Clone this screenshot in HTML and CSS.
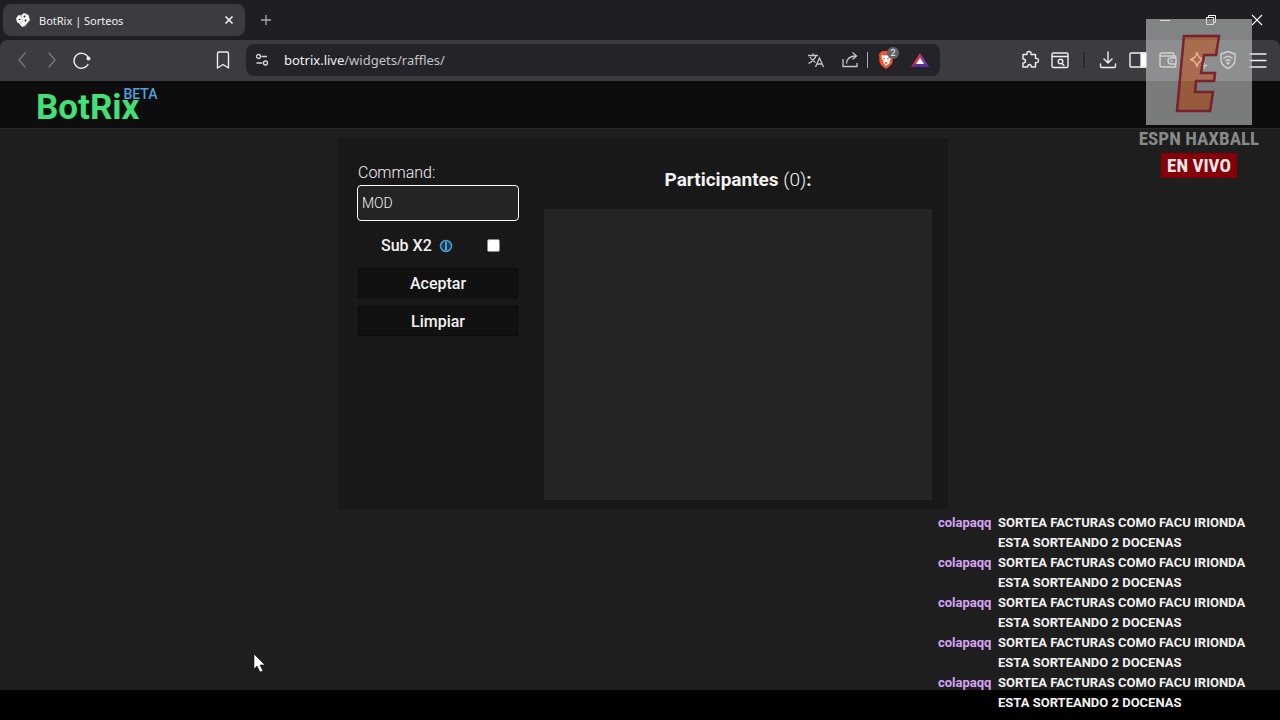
FILE: index.html
```html
<!DOCTYPE html>
<html lang="es">
<head>
<meta charset="utf-8">
<title>BotRix | Sorteos</title>
<link rel="stylesheet" href="styles.css">
</head>
<body>
<div class="screen">
  <div class="tabstrip">
    <div class="tab">
      <svg class="favicon" viewBox="0 0 16 16"><path d="M1 6.500 3.500 3 6 3.500 9 1l4.500 2L15 8l-5 6-3 1-2.500-3L2 10z" fill="#f7f7f7"/><path d="m6 3.500 1.500 5L4.500 12" stroke="#b0b0b8" stroke-width=".7" fill="none"/><circle cx="9.500" cy="4.500" r="1" fill="#26252c"/><circle cx="10.500" cy="8.500" r="1" fill="#26252c"/><circle cx="4.500" cy="7.500" r=".8" fill="#26252c"/></svg>
      <span class="tab-title">BotRix | Sorteos</span>
      <button class="plain" aria-label="Cerrar pestaña"><svg width="10" height="10" viewBox="0 0 10 10"><path d="m1.500 1.500 7 7m0-7-7 7" stroke="#f2f2f2" stroke-width="1.600"/></svg></button>
    </div>
    <button class="plain newtab" aria-label="Nueva pestaña"><svg width="12" height="12" viewBox="0 0 12 12"><path d="M6 1v10M1 6h10" stroke="#a9a8ad" stroke-width="1.300"/></svg></button>
    <div class="window-controls">
      <button class="plain" aria-label="Minimizar"><svg width="12" height="12" viewBox="0 0 12 12"><path d="M1 6.500h10" stroke="#fff"/></svg></button>
      <button class="plain" aria-label="Restaurar"><svg width="12" height="12" viewBox="0 0 12 12" fill="none" stroke="#fff"><path d="M1.500 3.500h7v7h-7zM3.500 3V1.500h7v7H9"/></svg></button>
      <button class="plain" aria-label="Cerrar"><svg width="12" height="12" viewBox="0 0 12 12"><path d="m1 1 10 10m0-10L1 11" stroke="#fff" stroke-width="1.100"/></svg></button>
    </div>
  </div>

  <div class="toolbar">
    <button class="tool dim" aria-label="Atrás"><svg viewBox="0 0 20 20"><path d="m13 3-6 7 6 7"/></svg></button>
    <button class="tool dim" aria-label="Adelante"><svg viewBox="0 0 20 20"><path d="m7 3 6 7-6 7"/></svg></button>
    <button class="tool" aria-label="Recargar"><svg viewBox="0 0 20 20"><path d="M16 14.500A7.500 7.500 0 1 1 16.500 8"/><circle cx="16.500" cy="8.500" r="1.300" fill="#eee"/></svg></button>
    <button class="tool bookmark" aria-label="Marcador"><svg viewBox="0 0 20 20"><path d="M4.500 3.500q0-1.500 1.500-1.500h8q1.500 0 1.500 1.500V18L10 14.500 4.500 18z"/></svg></button>
    <div class="address">
      <svg class="site" viewBox="0 0 16 16"><circle cx="4.500" cy="4.500" r="2"/><path d="M7.500 4.500H13M2.500 11h6"/><circle cx="11.500" cy="11" r="2"/></svg>
      <div class="url"><b>botrix.live</b>/widgets/raffles/</div>
      <button class="plain" aria-label="Traducir"><svg class="ico" viewBox="0 0 18 18"><path d="M1 4.500h10M6 2.500v2M9 4.500C8 8 5.500 10.500 1.500 12.500M3 6c1 2 3 4 5.500 5.500M8.500 16l4-9 4 9M10 13h5"/></svg></button>
      <button class="plain share" aria-label="Compartir"><svg class="ico" viewBox="0 0 18 18"><path d="M2 8v7.500h14V12M5.500 12.500Q6 5 15 5M11.500 1.500 15.500 5l-4 3.500"/></svg></button>
      <span class="bar"></span>
      <button class="plain brave" aria-label="Escudos"><svg width="18" height="20" viewBox="0 0 18 20"><path d="M5 1h8l3 3-.5 8Q15 15 9 19 3 15 2.500 12L2 4z" fill="#f0532d"/><path d="m4.500 5 3 .5L9 5l1.500.5 3-.5.8 3-2 3.500.5 1.500L9 16l-2.800-3 .5-1.500-2-3.500z" fill="#fff"/><path d="m5.500 7.500 2.500.7-.6 1.500zm7 0-2.500.7.600 1.500zM7 13l2-1 2 1-2 1z" fill="#e3482c"/></svg><span class="count">2</span></button>
      <button class="plain rewards" aria-label="Recompensas"><svg width="18" height="16" viewBox="0 0 18 16"><path d="M9 1 0 15h9z" fill="#e5334d"/><path d="m9 1 9 14H9z" fill="#8a3fa8"/><path d="M0 15h18l-4.500-4h-9z" fill="#592f9d"/><path d="m9 6 4 6H5z" fill="#fff"/></svg></button>
    </div>
    <button class="tool" aria-label="Extensiones"><svg viewBox="0 0 20 20"><path d="M3 4.500h4q-.5-3 2-3t2 3h4.500v4q3-.5 3 2t-3 2V17h-4q-.5-2.500-2-2.500T7.500 17H3v-4q2.500 0 2.500-2T3 9z"/></svg></button>
    <button class="tool" aria-label="Buscar pestañas"><svg viewBox="0 0 20 20"><rect x="2" y="3" width="16" height="14.500" rx="1.500"/><path d="M2 6.500h16m-6 7 2 2"/><circle cx="10.500" cy="11.500" r="2.300"/></svg></button>
    <span class="divider"></span>
    <button class="tool" aria-label="Descargas"><svg viewBox="0 0 20 20"><path d="M10 2v11M6 9l4 4 4-4M2.500 14v2q0 1.500 1.500 1.500h12q1.500 0 1.500-1.500v-2"/></svg></button>
    <button class="tool" aria-label="Panel lateral"><svg viewBox="0 0 20 20"><rect x="2" y="3" width="16" height="14" rx="1"/><path d="M13 3h5v14h-5z" fill="#fff"/></svg></button>
    <button class="tool" aria-label="Cartera"><svg viewBox="0 0 20 20"><path d="M17.500 7.500V6H3.500Q2 6 2 4.500T3.500 3h12v3M2 4.500V15q0 2 2 2h13.500v-2.500M18 8h-5q-3 0-3 3t3 3h5zm-5 3h1"/></svg></button>
    <button class="tool" aria-label="Asistente"><svg viewBox="0 0 20 20"><path d="M9 2.500q1 5.500 6.500 7Q10 11 9 16.500 8 11 2.500 9.500 8 8 9 2.500zM16 13v5m-2.500-2.500h5"/></svg></button>
    <button class="tool" aria-label="VPN"><svg viewBox="0 0 20 20"><path d="m10 1.500 7 2.500v6q0 5-7 8.500Q3 15 3 10V4zM6 8q4-3 8 0m-6 2.500q2-1.500 4 0"/><circle cx="10" cy="13" r=".8" fill="#eee"/></svg></button>
    <button class="tool" aria-label="Menú"><svg viewBox="0 0 20 20"><path d="M2 4h16M2 10.500h16M2 17h16"/></svg></button>
  </div>

  <header class="site-header"><a class="logo" href="#">BotRix<sup>BETA</sup></a></header>

  <main class="page">
    <section class="card">
      <form class="controls">
        <label for="cmd">Command:</label>
        <input class="command" id="cmd" type="text" value="MOD">
        <div class="sub">
          <label for="sub">Sub X2</label>
          <svg width="14" height="14" viewBox="0 0 14 14"><circle cx="7" cy="7" r="5.500" fill="#173a52" stroke="#4a9dd4" stroke-width="1.500"/><path d="M7 2.500v9" stroke="#4a9dd4" stroke-width="2"/></svg>
          <input class="check" id="sub" type="checkbox">
        </div>
        <button class="action" type="button">Aceptar</button>
        <button class="action" type="button">Limpiar</button>
      </form>
      <div class="people">
        <h2>Participantes <span>(0)</span>:</h2>
        <div class="list"></div>
      </div>
    </section>
  </main>
  <div class="taskbar"></div>

  <aside class="stream">
    <svg class="emblem" viewBox="0 0 106 106"><path d="M0 0h106v106H0zM37 16h37l-3 21H59l-3 16h14l-1 10H51l-1 9h18l-3 21H30z" fill="#bec2c0" fill-opacity=".62" fill-rule="evenodd"/><path d="M37 16h37l-3 21H59l-3 16h14l-1 10H51l-1 9h18l-3 21H30z" fill="#ec8c58" fill-opacity=".62"/><path d="M38 17h35l-3 19H58l-3 18h14l-1 8H50l-1 11h18l-3 19H31z" fill="none" stroke="#761b2b" stroke-opacity=".9" stroke-width="2.500"/></svg>
    <div class="channel">ESPN HAXBALL</div>
    <div class="live">EN VIVO</div>
  </aside>

  <ul class="chat">
    <li><span class="user">colapaqq</span><span>SORTEA FACTURAS COMO FACU IRIONDA ESTA SORTEANDO 2 DOCENAS</span></li>
    <li><span class="user">colapaqq</span><span>SORTEA FACTURAS COMO FACU IRIONDA ESTA SORTEANDO 2 DOCENAS</span></li>
    <li><span class="user">colapaqq</span><span>SORTEA FACTURAS COMO FACU IRIONDA ESTA SORTEANDO 2 DOCENAS</span></li>
    <li><span class="user">colapaqq</span><span>SORTEA FACTURAS COMO FACU IRIONDA ESTA SORTEANDO 2 DOCENAS</span></li>
    <li><span class="user">colapaqq</span><span>SORTEA FACTURAS COMO FACU IRIONDA ESTA SORTEANDO 2 DOCENAS</span></li>
  </ul>

  <svg class="cursor" viewBox="0 0 12 18"><path d="M1 0v15l3-3 3 6 3-1-3-6h5z" fill="#fff" stroke="#111" stroke-width=".6"/></svg>
</div>
</body>
</html>
```
FILE: styles.css
```css
* { box-sizing: border-box; }
body { margin: 0; background: #1e1e1e; color: #f2f2f2; font-family: Roboto, sans-serif; }
button, input { font-family: inherit; color: inherit; }
.screen { position: relative; display: flex; flex-direction: column; min-height: 100vh; overflow: hidden; }

.plain { display: flex; align-items: center; justify-content: center; padding: 0; border: 0; background: none; }
.tabstrip { display: flex; align-items: center; height: 40px; padding: 0 17px 0 3px; background: #1f1e23; }
.tab { display: flex; align-items: center; width: 242px; height: 32px; padding: 0 11px 0 12px; border-radius: 8px; background: #3c3b40; font: 11px "Noto Sans", sans-serif; }
.favicon { width: 16px; height: 16px; margin-right: 8px; }
.tab-title { flex: 1; }
.newtab { margin-left: 15px; }
.window-controls { display: flex; gap: 34px; margin-left: auto; }

.toolbar { display: flex; align-items: center; height: 41px; padding: 0 7px 1px; background: #3c3b40; border-radius: 8px 8px 0 0; }
.tool { display: flex; align-items: center; justify-content: center; width: 30px; height: 30px; padding: 0; border: 0; background: none; }
.tool svg { width: 20px; height: 20px; fill: none; stroke: #eee; stroke-width: 1.400; stroke-linejoin: round; stroke-linecap: round; }
.dim svg { stroke: #77767b; }
.bookmark { margin: 0 8px 0 111px; }
.address { display: flex; flex: 1; align-items: center; height: 32px; margin-right: 75px; padding: 0 11px 0 8px; border-radius: 8px; background: #242328; }
.site { width: 16px; height: 16px; margin-right: 14px; fill: none; stroke: #d8d8da; stroke-width: 1.300; }
.url { flex: 1; color: #c3c3c6; font: 13px "Noto Sans", sans-serif; }
.url b { color: #f0f0f0; font-weight: 400; }
.ico { width: 18px; height: 18px; fill: none; stroke: #c5c5c8; stroke-width: 1.300; }
.share { margin: 0 8px 0 16px; }
.bar { width: 1px; height: 16px; background: #aaa; }
.brave { position: relative; margin-left: 9px; }
.count { position: absolute; top: -3px; left: 10px; width: 12px; height: 12px; border-radius: 6px; background: #626268; font-size: 9px; line-height: 12px; }
.rewards { margin-left: 16px; }
.divider { width: 2px; height: 16px; margin: 0 8px; background: #29282d; }

.site-header { height: 48px; padding: 5px 36px; border-bottom: 1px solid #292929; background: #0d0d0d; }
.logo { display: flex; align-items: flex-start; color: #43df77; font-size: 35px; font-weight: 700; line-height: 44px; text-decoration: none; }
.logo sup { margin-left: -16px; color: #4da3dc; font-size: 14px; font-weight: 500; line-height: 16px; }

.page { flex: 1; padding: 9px 0; }
.card { display: grid; grid-template-columns: 160px 1fr; gap: 26px; width: 610px; margin-left: calc(50% - 302px); padding: 9px 16px 9px 20px; background: #181818; }
.controls { display: flex; flex-direction: column; padding-top: 16px; font-size: 16px; line-height: 20px; }
.controls > label { font-weight: 300; }
.command { width: 162px; height: 36px; margin: 2px -1px 0; padding: 0 4px; border: 1px solid #fff; border-radius: 4px; outline: 0; background: #242424; font-size: 14px; font-weight: 300; }
.sub { display: flex; align-items: center; height: 47px; padding: 2px 18px 0 23px; font-weight: 500; }
.sub svg { margin-left: 7px; }
.check { appearance: none; width: 13px; height: 13px; margin: 0 0 0 auto; border: 1px solid #888; border-radius: 2px; background: #fff; }
.check:checked { background: #4da3dc; }
.action { height: 30px; margin-bottom: 8px; padding: 0; border: 1px solid #0b0b0b; background: #111; font-size: 16px; font-weight: 500; }
.people h2 { margin: 0; padding: 20px 0 17px; font-size: 19px; font-weight: 700; line-height: 25px; text-align: center; }
.people span { font-weight: 300; }
.list { height: 291px; background: #242424; }
.taskbar { height: 30px; background: #000; }

.stream { position: absolute; top: 19px; right: 18px; display: flex; flex-direction: column; align-items: center; width: 126px; font-family: "Liberation Sans Narrow", "Roboto Condensed", Roboto, sans-serif; font-weight: 700; pointer-events: none; }
.emblem { width: 106px; height: 106px; }
.channel { color: #898989; font-size: 19px; line-height: 28px; white-space: nowrap; }
.live { padding: 0 6px; background: #850008; color: #f3e8e8; font-size: 19px; line-height: 25px; white-space: nowrap; }

.chat { position: absolute; right: 20px; bottom: 7px; display: flex; flex-direction: column; width: 322px; margin: 0; padding: 0; list-style: none; font-size: 13px; font-weight: 700; line-height: 20px; }
.chat li { display: grid; grid-template-columns: 54px 1fr; gap: 6px; }
.user { color: #d4a5f5; }
.cursor { position: absolute; top: 654px; left: 253px; width: 12px; height: 18px; }
```
